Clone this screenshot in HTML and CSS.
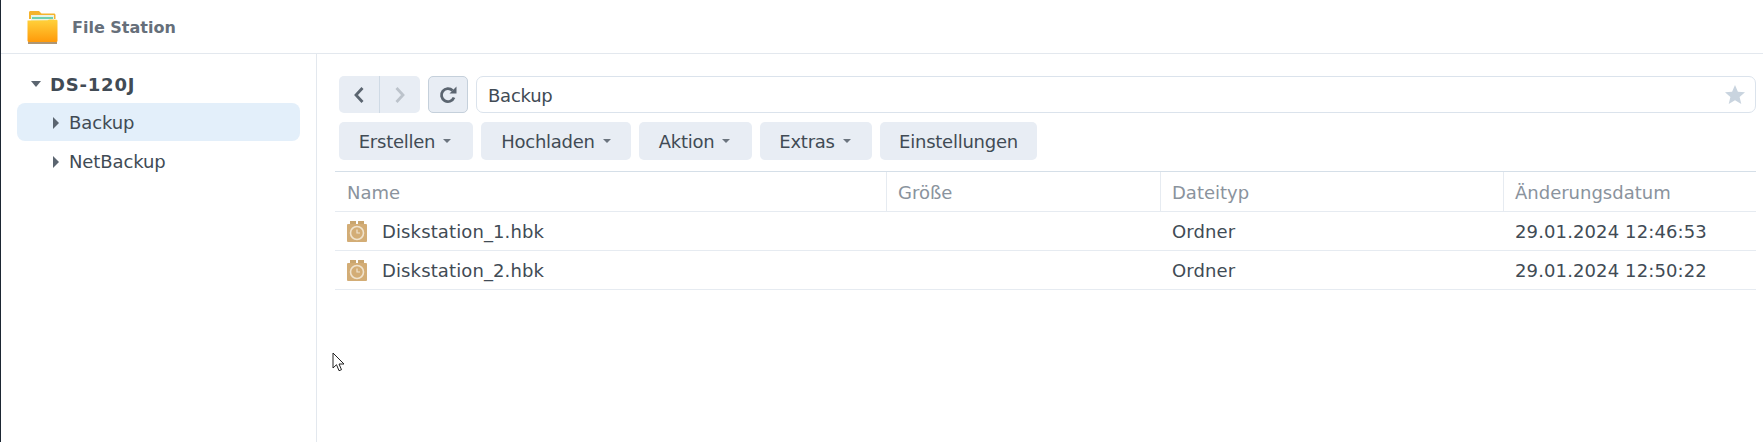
FILE: index.html
```html
<!DOCTYPE html>
<html lang="de">
<head>
    <meta charset="UTF-8">
    <meta name="viewport" content="width=device-width, initial-scale=1.0">
    <title>File Station</title>
    <link rel="stylesheet" href="styles.css">
</head>
<body>
    <div class="window">
        <div class="titlebar">
            <svg class="app-icon" width="34" height="36" viewBox="0 0 34 36">
                <defs>
                    <linearGradient id="folderFront" x1="0" y1="0" x2="0" y2="1">
                        <stop offset="0" stop-color="#ffd23c"/>
                        <stop offset="1" stop-color="#ff9a0a"/>
                    </linearGradient>
                </defs>
                <path d="M3 8V3.5C3 2.7 3.6 2 4.400 2H13l2.500 2.500H28c.8 0 1.500.7 1.500 1.500V10H3z" fill="#f5b32c"/>
                <rect x="5" y="6" width="23" height="6" fill="#e9f3e6"/>
                <rect x="6" y="8" width="21" height="2" fill="#6fd0b0"/>
                <path d="M1.500 11.500l20-.2 2-.8 7 .2c.7 0 1 .5 1 1.200V31.500c0 1-.6 1.500-1.500 1.500H3c-1 0-1.500-.6-1.500-1.500z" fill="url(#folderFront)"/>
                <rect x="2" y="33" width="29" height="2" fill="#8a6a3a" opacity=".7"/>
            </svg>
            <span class="app-name">File Station</span>
        </div>
        <div class="main">
            <div class="sidebar">
                <div class="tree-root"><span class="caret-down"></span>DS-120J</div>
                <div class="tree-item selected"><span class="caret-right"></span>Backup</div>
                <div class="tree-item"><span class="caret-right"></span>NetBackup</div>
            </div>
            <div class="content">
                <div class="toolbar">
                    <div class="nav-row">
                        <div class="nav-group">
                            <button class="nav-btn">
                                <svg width="12" height="18" viewBox="0 0 12 18"><path d="M9.500 2L3 9l6.500 7" fill="none" stroke="#5b6570" stroke-width="2.800"/></svg>
                            </button>
                            <button class="nav-btn">
                                <svg width="12" height="18" viewBox="0 0 12 18"><path d="M2.500 2L9 9l-6.500 7" fill="none" stroke="#bcc3cb" stroke-width="2.800"/></svg>
                            </button>
                        </div>
                        <button class="refresh-btn">
                            <svg width="18" height="18" viewBox="0 0 18 18">
                                <path d="M15 11.500A6.500 6.500 0 1 1 13.600 4.500" fill="none" stroke="#5b6570" stroke-width="2.800"/>
                                <path d="M10.500 7.500h7v-7z" fill="#5b6570"/>
                            </svg>
                        </button>
                        <div class="address-bar">
                            <span class="address-text">Backup</span>
                            <svg width="22" height="22" viewBox="0 0 22 22"><path d="M11 1l2.900 6.700 7.100.6-5.400 4.700 1.700 7L11 16.200 4.700 20l1.700-7L1 8.300l7.100-.6z" fill="#c9d4df"/></svg>
                        </div>
                    </div>
                    <div class="action-row">
                        <button class="action-btn w-erstellen">Erstellen<span class="btn-caret"></span></button>
                        <button class="action-btn w-hochladen">Hochladen<span class="btn-caret"></span></button>
                        <button class="action-btn w-aktion">Aktion<span class="btn-caret"></span></button>
                        <button class="action-btn w-extras">Extras<span class="btn-caret"></span></button>
                        <button class="action-btn w-einstellungen">Einstellungen</button>
                    </div>
                </div>
                <div class="file-table">
                    <div class="table-head">
                        <div class="col-name">Name</div>
                        <div class="col-size">Größe</div>
                        <div class="col-type">Dateityp</div>
                        <div class="col-date">Änderungsdatum</div>
                    </div>
                    <div class="table-row">
                        <div class="col-name">
                            <svg class="file-icon" width="20" height="21" viewBox="0 0 20 21">
                                <rect x="3" y="0" width="6" height="3" fill="#c9a56e"/>
                                <rect x="11" y="0" width="6" height="3" fill="#c9a56e"/>
                                <rect x="0" y="3" width="20" height="18" rx="1" fill="#d3ad76"/>
                                <circle cx="10" cy="12" r="6.500" fill="none" stroke="#f0e3cd" stroke-width="1.600"/>
                                <path d="M10 8.500V12h3" fill="none" stroke="#f0e3cd" stroke-width="1.200"/>
                            </svg>
                            Diskstation_1.hbk
                        </div>
                        <div class="col-size"></div>
                        <div class="col-type">Ordner</div>
                        <div class="col-date">29.01.2024 12:46:53</div>
                    </div>
                    <div class="table-row">
                        <div class="col-name">
                            <svg class="file-icon" width="20" height="21" viewBox="0 0 20 21">
                                <rect x="3" y="0" width="6" height="3" fill="#c9a56e"/>
                                <rect x="11" y="0" width="6" height="3" fill="#c9a56e"/>
                                <rect x="0" y="3" width="20" height="18" rx="1" fill="#d3ad76"/>
                                <circle cx="10" cy="12" r="6.500" fill="none" stroke="#f0e3cd" stroke-width="1.600"/>
                                <path d="M10 8.500V12h3" fill="none" stroke="#f0e3cd" stroke-width="1.200"/>
                            </svg>
                            Diskstation_2.hbk
                        </div>
                        <div class="col-size"></div>
                        <div class="col-type">Ordner</div>
                        <div class="col-date">29.01.2024 12:50:22</div>
                    </div>
                </div>
            </div>
        </div>
    </div>
    <svg class="cursor" width="14" height="21" viewBox="0 0 14 21">
        <path d="M1 1v15l3.500-3.300 2.500 6 2.500-1-2.500-5.700H12z" fill="#fff" stroke="#222" stroke-width="1"/>
    </svg>
</body>
</html>
```

FILE: styles.css
```css
html, body {
    margin: 0;
    height: 100%;
    overflow: hidden;
}
body {
    background: #fff;
    font-family: "DejaVu Sans", sans-serif;
    font-size: 18px;
    color: #414b55;
    position: relative;
}
button {
    font-family: inherit;
    font-size: 18px;
    color: #414b55;
    border: 0;
    padding: 0;
    cursor: pointer;
}
.window {
    height: 100%;
    display: flex;
    flex-direction: column;
    border-left: 1px solid #1d2733;
    box-sizing: border-box;
}
.titlebar {
    height: 53px;
    display: flex;
    align-items: center;
    flex-shrink: 0;
    padding-left: 25px;
    border-bottom: 1px solid #e3e8ee;
}
.app-icon {
    margin-right: 12px;
}
.app-name {
    font-size: 16px;
    font-weight: 700;
    color: #666f7a;
    padding-top: 2px;
}
.main {
    flex: 1;
    display: flex;
    min-height: 0;
}
.sidebar {
    width: 316px;
    flex-shrink: 0;
    box-sizing: border-box;
    border-right: 1px solid #e3e8ee;
    padding: 11px 16px 0 16px;
}
.tree-root {
    height: 38px;
    display: flex;
    align-items: center;
    font-weight: 700;
    letter-spacing: .8px;
    padding-left: 14px;
}
.caret-down {
    width: 0;
    height: 0;
    border-left: 5.500px solid transparent;
    border-right: 5.500px solid transparent;
    border-top: 6px solid #5b6570;
    margin-right: 9px;
}
.tree-item {
    height: 38px;
    box-sizing: border-box;
    display: flex;
    align-items: center;
    padding: 1px 0 0 36px;
    border-radius: 8px;
    letter-spacing: -.1px;
}
.tree-item.selected {
    background: #e3effa;
}
.selected + .tree-item {
    margin-top: 1px;
}
.caret-right {
    width: 0;
    height: 0;
    border-top: 6px solid transparent;
    border-bottom: 6px solid transparent;
    border-left: 6px solid #5b6570;
    margin-right: 10px;
}
.content {
    flex: 1;
    min-width: 0;
    padding: 22px 7px 0 18px;
}
.toolbar {
    padding-left: 4px;
}
.nav-row {
    display: flex;
    height: 37px;
}
.nav-group {
    display: flex;
    width: 81px;
    margin-right: 8px;
    border-radius: 5px;
    overflow: hidden;
    background: #e8edf4;
}
.nav-btn {
    flex: 1;
    display: flex;
    align-items: center;
    justify-content: center;
    background: none;
}
.nav-btn + .nav-btn {
    border-left: 1px solid #cfdae5;
}
.refresh-btn {
    width: 40px;
    margin-right: 8px;
    display: flex;
    align-items: center;
    justify-content: center;
    box-sizing: border-box;
    background: #e8edf4;
    border: 1px solid #c5d0db;
    border-radius: 5px;
}
.address-bar {
    flex: 1;
    display: flex;
    align-items: center;
    justify-content: space-between;
    padding: 0 9px 0 11px;
    border: 1px solid #dbe3ec;
    border-radius: 7px;
}
.address-text {
    padding-top: 1px;
    letter-spacing: -.25px;
}
.action-row {
    display: flex;
    gap: 8px;
    margin-top: 9px;
    height: 38px;
}
.action-btn {
    background: #e8edf4;
    border-radius: 5px;
    display: flex;
    align-items: center;
    justify-content: center;
    letter-spacing: -.25px;
}
.w-erstellen { width: 134px; padding-right: 2px; }
.w-hochladen { width: 150px; }
.w-aktion { width: 113px; padding-right: 2px; }
.w-extras { width: 112px; padding-right: 2px; }
.w-einstellungen { width: 157px; }
.btn-caret {
    width: 0;
    height: 0;
    border-left: 4px solid transparent;
    border-right: 4px solid transparent;
    border-top: 4px solid #6b747e;
    margin-left: 8px;
}
.file-table {
    margin-top: 11px;
    border-top: 1px solid #d5dfe8;
}
.table-head, .table-row {
    display: grid;
    grid-template-columns: 551px 274px 343px 1fr;
    height: 39px;
    box-sizing: border-box;
    align-items: stretch;
    border-bottom: 1px solid #e6ebf1;
}
.table-head {
    height: 40px;
    color: #8a939d;
}
.table-row {
    letter-spacing: .12px;
}
.table-head > div, .table-row > div {
    display: flex;
    align-items: center;
    padding-left: 11px;
}
.table-head > .col-name, .table-row > .col-name {
    padding-left: 12px;
}
.table-head > div + div {
    border-left: 1px solid #e6ebf1;
}
.table-row > div + div {
    border-left: 1px solid transparent;
}
.table-head > div {
    padding-top: 1px;
}
.file-icon {
    margin-right: 15px;
    flex-shrink: 0;
}
.cursor {
    position: absolute;
    left: 332px;
    top: 352px;
}
```
